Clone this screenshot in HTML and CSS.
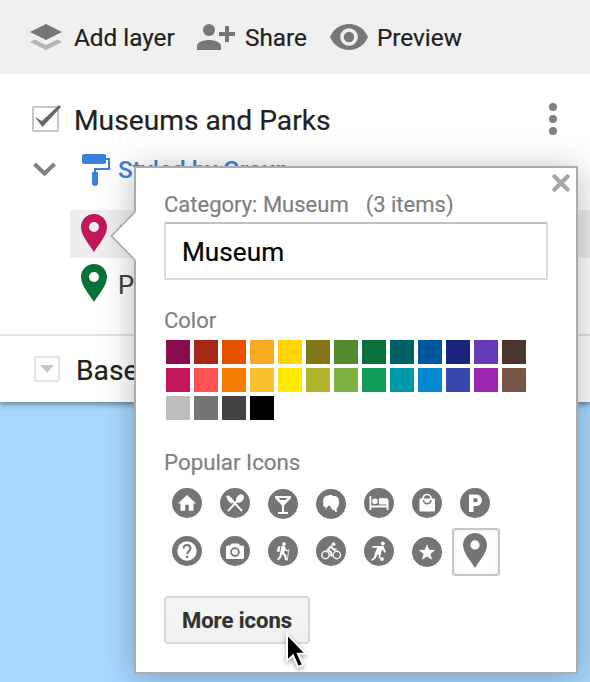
FILE: index.html
```
<!DOCTYPE html>
<html lang="en">
<head>
<meta charset="utf-8">
<title>Museums and Parks</title>
<link rel="stylesheet" href="styles.css">
</head>
<body>
<main class="panel">
  <nav class="toolbar">
    <div class="tool tool-layer">
      <svg width="32" height="26" viewBox="0 0 32 26"><path fill="#b5b5b5" d="M0 18 4.500 15.500 16 21 27.500 15.500 32 18 16 26z"/><path fill="#777" d="M16 0 32 8 16 16 0 8z"/></svg>
      <span>Add layer</span>
    </div>
    <div class="tool tool-share">
      <svg width="38" height="26" viewBox="0 0 38 26" fill="#777"><circle cx="12" cy="6" r="6"/><path d="M0 26v-4c0-4 7-6 12-6s12 2 12 6v4zM28 2h4v6h6v4h-6v6h-4v-6h-6V8h6z"/></svg>
      <span>Share</span>
    </div>
    <div class="tool tool-preview">
      <svg width="38" height="26" viewBox="0 0 38 26"><path fill="#777" d="M0 13C3.500 5 10.500 0 19 0s15.500 5 19 13c-3.500 8-10.500 13-19 13S3.500 21 0 13z"/><circle cx="19" cy="13" r="7" fill="#777" stroke="#f0f0f0" stroke-width="3.600"/></svg>
      <span>Preview</span>
    </div>
  </nav>

  <section class="layer">
    <header class="layer-head">
      <svg width="30" height="28" viewBox="0 0 30 28"><rect x="1" y="2" width="25" height="24" rx="1" fill="#fff" stroke="#c6c6c6" stroke-width="2"/><path fill="#666" d="m3 12 7 4L27 0l2 2-18.500 20z"/></svg>
      <h1>Museums and Parks</h1>
      <svg class="kebab" width="8" height="32" viewBox="0 0 8 32" fill="#808080"><circle cx="4" cy="4" r="4"/><circle cx="4" cy="16" r="4"/><circle cx="4" cy="28" r="4"/></svg>
    </header>
    <div class="style-row">
      <svg class="chevron" width="24" height="15" viewBox="0 0 24 15"><path d="m1.500 2 10 9.500 10-9.500" fill="none" stroke="#808080" stroke-width="4"/></svg>
      <svg class="roller" width="28" height="32" viewBox="0 0 28 32"><rect width="24" height="10" rx="2" fill="#3a81df"/><path d="M24 5h3v10H13v4" fill="none" stroke="#3a81df" stroke-width="2"/><path fill="#3a81df" d="M10 18h6v11a3 3 0 0 1-6 0z"/></svg>
      <span>Styled by Group</span>
    </div>
    <ul class="groups">
      <li class="group selected">
        <svg width="26" height="38" viewBox="0 0 26 38"><path fill="#c2185b" fill-rule="evenodd" d="M13 0C5.800 0 0 5.800 0 13c0 9 9 18 13 25 4-7 13-16 13-25C26 5.800 20.200 0 13 0zm0 8a5 5 0 1 1 0 10 5 5 0 0 1 0-10z"/></svg>
        <span>Museum</span>
      </li>
      <li class="group">
        <svg width="26" height="38" viewBox="0 0 26 38"><path fill="#097138" fill-rule="evenodd" d="M13 0C5.800 0 0 5.800 0 13c0 9 9 18 13 25 4-7 13-16 13-25C26 5.800 20.200 0 13 0zm0 8a5 5 0 1 1 0 10 5 5 0 0 1 0-10z"/></svg>
        <span>Park</span>
      </li>
    </ul>
  </section>

  <section class="base">
    <svg width="26" height="26" viewBox="0 0 26 26"><rect x="1" y="1" width="24" height="24" rx="1" fill="#fff" stroke="#e2e2e2" stroke-width="2"/><path fill="#c8c8c8" d="M6 9h14l-7 8z"/></svg>
    <span>Base map</span>
  </section>
</main>

<aside class="popup">
  <svg class="pointer" width="27" height="50" viewBox="0 0 27 50"><path fill="#fff" d="M27 0v50h-2L1 25 25 0z"/><path d="M25.500 .5 1.500 25l24 24.500" fill="none" stroke="#ababab" stroke-width="1.700"/></svg>
  <svg class="close" width="18" height="18" viewBox="0 0 18 18"><path d="m2.500 2.500 13 13m0-13-13 13" fill="none" stroke="#a6a6a6" stroke-width="4.300" stroke-linecap="round"/></svg>

  <div class="label category"><span>Category: Museum</span><span>(3 items)</span></div>
  <div class="field">Museum</div>

  <div class="label color-label">Color</div>
  <div class="swatches">
    <i class="c1"></i><i class="c2"></i><i class="c3"></i><i class="c4"></i><i class="c5"></i><i class="c6"></i><i class="c7"></i><i class="c8"></i><i class="c9"></i><i class="c10"></i><i class="c11"></i><i class="c12"></i><i class="c13"></i>
    <i class="c14"></i><i class="c15"></i><i class="c16"></i><i class="c17"></i><i class="c18"></i><i class="c19"></i><i class="c20"></i><i class="c21"></i><i class="c22"></i><i class="c23"></i><i class="c24"></i><i class="c25"></i><i class="c26"></i>
    <i class="c27"></i><i class="c28"></i><i class="c29"></i><i class="c30"></i>
  </div>

  <div class="label icons-label">Popular Icons</div>
  <div class="icons">
    <div class="cell"><svg class="ic" viewBox="0 0 30 30"><circle cx="15" cy="15" r="15"/><path class="w" d="m15 7 9 8.500h-2.500v7.300h-4.700v-6h-3.600v6H8.500v-7.300H6z"/></svg></div>
    <div class="cell"><svg class="ic" viewBox="0 0 30 30"><circle cx="15" cy="15" r="15"/><path class="l" d="m8 8 14 15M8 23 20 10" stroke-width="1.900"/><path class="w" d="M6.500 7.500c2.500 0 7 3.500 7.500 7l-2.500 1C8 13.500 6 10 6.500 7.500z"/><ellipse class="w" cx="20" cy="10.500" rx="3.200" ry="4.600" transform="rotate(42 20 10.500)"/></svg></div>
    <div class="cell low"><svg class="ic" viewBox="0 0 30 30"><circle cx="15" cy="15" r="15"/><path class="w" fill-rule="evenodd" d="M7 7h16v2l-7 7.500V23h4v2H10v-2h4v-6.500L7 9zm3.500 2 1.800 2h5.400l1.800-2z"/></svg></div>
    <div class="cell low"><svg class="ic" viewBox="0 0 30 30"><circle cx="15" cy="15" r="15"/><path class="w" d="M8.500 18c-1.800-1-1.800-2.500-1-4-1-4 .5-7 4.500-7.500 2-1 3.800-.8 5 .5 4-.5 6 2 5.800 5 .8 3-.5 5.500-2 7.500l-.3 2 .8 1.500h-2l-.3-1.500-2.300-.5c-1.500-1.500-2-3.500-3-4.500-1 0-1.700.8-2.200 1.500l-1.500 1.500.8 1H9.500l.3-2z"/></svg></div>
    <div class="cell"><svg class="ic" viewBox="0 0 30 30"><circle cx="15" cy="15" r="15"/><path class="w" d="M5.500 8h1.800v9.500H22.500v-1H15v-6.300h7a2.500 2.500 0 0 1 2.500 2.500V22h-1.800v-2.500H7.300V22H5.500z"/><circle class="w" cx="11" cy="13.300" r="2.800"/></svg></div>
    <div class="cell"><svg class="ic" viewBox="0 0 30 30"><circle cx="15" cy="15" r="15"/><path class="l" d="M11 11.500v-1a4 4 0 0 1 8 0v1" stroke-width="1.700"/><rect class="w" x="7.500" y="10.500" width="15.500" height="13" rx="1"/><path d="M11.500 12a3.700 3.700 0 0 0 7.500 0" fill="none" stroke="#757575" stroke-width="1.500"/></svg></div>
    <div class="cell"><svg class="ic" viewBox="0 0 30 30"><circle cx="15" cy="15" r="15"/><path class="w" fill-rule="evenodd" d="M9 6.500h7c7.800 0 7.800 11.500 0 11.500h-2.500v6H9zm4.500 3.800v4H16c2.300 0 2.300-4 0-4z"/></svg></div>

    <div class="cell"><svg class="ic" viewBox="0 0 30 30"><circle cx="15" cy="15" r="15"/><circle class="w" cx="15" cy="15" r="9.700"/><path d="M11.500 12.500c0-5 7-4.500 7 0 0 2.500-3.300 2.500-3.300 5.700" fill="none" stroke="#757575" stroke-width="2"/><circle cx="15.200" cy="21" r="1.300"/></svg></div>
    <div class="cell"><svg class="ic" viewBox="0 0 30 30"><circle cx="15" cy="15" r="15"/><path class="w" fill-rule="evenodd" d="M11.500 7.500h7l1.500 2h2.500A1.500 1.500 0 0 1 24 11v10.500a1.500 1.500 0 0 1-1.500 1.500h-15A1.500 1.500 0 0 1 6 21.500V11a1.500 1.500 0 0 1 1.500-1.500H10zM15 11.300a4.800 4.800 0 1 0 0 9.600 4.800 4.800 0 0 0 0-9.600z"/><circle class="w" cx="15" cy="16.100" r="3"/></svg></div>
    <div class="cell"><svg class="ic" viewBox="0 0 30 30"><circle cx="15" cy="15" r="15"/><circle class="w" cx="16" cy="7.800" r="1.900"/><path class="w" d="m13.500 10 3-.2 1.300 3.200 2.200 1.200-.5 1.300-2.700-1.300-.5 2.600 2 2.500.8 5h-2l-1-4.200-2-2.200-1 3.400-2.500 3.300-1.400-1 2.300-3.500zM10 10.500l2.500-.5-1.200 6-2.500-.5z"/><path class="l" d="m20.800 13-1.500 11.500" stroke-width=".8"/></svg></div>
    <div class="cell"><svg class="ic" viewBox="0 0 30 30"><circle cx="15" cy="15" r="15"/><g class="l" stroke-width="1.400"><circle cx="9.500" cy="19" r="3.700"/><circle cx="20.800" cy="19" r="3.700"/></g><circle class="w" cx="17.500" cy="8.200" r="1.900"/><path class="l" d="M20.500 13.500h-3l-2.500-3-3.300 3.300 3.600 2.700v4" stroke-width="1.900"/></svg></div>
    <div class="cell"><svg class="ic" viewBox="0 0 30 30"><circle cx="15" cy="15" r="15"/><circle class="w" cx="18.800" cy="7.500" r="1.900"/><circle class="w" cx="18" cy="23" r="1.900"/><path class="w" d="M8.300 10h11l2.700 6-1.400.8-2.300-3.600-1.500 4-4 2.300-.8 2.500-4 3-1-1.300 3-2.500 1-4.200 2.200-5.200H8.300z"/><path class="w" d="m14 15.500 3.200 1.800-1.200 5-1.600-.4.600-3.400-2-1.500z"/></svg></div>
    <div class="cell low"><svg class="ic" viewBox="0 0 30 30"><circle cx="15" cy="15" r="15"/><path class="w" d="m15 7.200 2.200 5.600 6 .3-4.700 3.800 1.600 5.800-5.100-3.300-5.100 3.300 1.600-5.800-4.700-3.800 6-.3z"/></svg></div>
    <div class="cell chosen"><svg width="24" height="35" viewBox="0 0 26 38"><path fill="#757575" fill-rule="evenodd" d="M13 0C5.800 0 0 5.800 0 13c0 9 9 18 13 25 4-7 13-16 13-25C26 5.800 20.200 0 13 0zm0 8a5 5 0 1 1 0 10 5 5 0 0 1 0-10z"/></svg></div>
  </div>

  <button class="more">More icons</button>
  <svg class="cursor" width="24" height="38" viewBox="0 0 24 38"><path fill="#000" stroke="#fff" stroke-width="2" d="M2 2v27l6-5.500 5 11.500 5-2.200-5-11h8z"/></svg>
</aside>
</body>
</html>
```
FILE: styles.css
```
* { box-sizing: border-box; }
body { margin: 0; width: 590px; height: 682px; position: relative; overflow: hidden; background: #a8d8ff; font-family: Roboto, sans-serif; color: #212121; -webkit-text-stroke: .2px; }
svg { display: block; flex: none; }
span, h1, .label, .field { white-space: nowrap; }

.panel { height: 402px; background: #fff; box-shadow: 0 2px 6px rgba(0, 0, 0, .45); }
.toolbar { height: 74px; padding-left: 30px; display: flex; align-items: center; background: #f0f0f0; font-size: 24.300px; }
.toolbar span { padding-top: 1px; }
.tool { display: flex; align-items: center; }
.tool-layer { width: 167px; gap: 12px; }
.tool-share { width: 133px; gap: 10px; }
.tool-preview { gap: 9px; }

.layer { height: 262px; border-bottom: 2px solid #e2e2e2; }
.layer-head { height: 91px; padding: 0 33px 0 32px; display: flex; align-items: center; }
.layer-head > svg { margin-top: -2px; }
.layer-head h1 { margin: 0 0 0 12px; padding-top: 2px; font-size: 28.200px; font-weight: 400; }
.layer-head .kebab { margin-left: auto; }
.style-row { height: 10px; padding-left: 33px; display: flex; align-items: center; font-size: 24.300px; font-weight: 500; color: #3a81df; -webkit-text-stroke: 0; }
.style-row .chevron { margin-top: -2px; }
.style-row span { padding-bottom: 2px; }
.roller { margin: 0 8px 0 25px; }
.groups { list-style: none; margin: 35px 0 0; padding: 0 0 0 70px; font-size: 25.500px; color: #444; }
.group { height: 50px; padding-left: 11px; display: flex; align-items: center; gap: 11px; }
.group span { padding-top: 3px; }
.group.selected { height: 48px; padding-bottom: 2px; background: #eee; }
.base { height: 66px; padding: 0 0 0 34px; display: flex; align-items: center; gap: 16px; font-size: 28.200px; }
.base span { padding-top: 2px; }

.popup { position: absolute; left: 134px; top: 166px; width: 444px; height: 508px; padding: 23px 28px; border: 2px solid #ababab; background: #fff; box-shadow: 0 4px 32px rgba(0, 0, 0, .28); }
.pointer { position: absolute; left: -26px; top: 43px; }
.close { position: absolute; right: 6px; top: 6px; }
.label { height: 28px; line-height: 28px; font-size: 22px; color: #808080; }
.category { display: flex; gap: 17px; }
.field { margin-top: 3px; width: 384px; height: 58px; padding-left: 16px; border: 2px solid #d9d9d9; border-top-color: #c0c0c0; border-radius: 2px; font-size: 26.200px; line-height: 57px; color: #000; }
.color-label { margin-top: 27px; }
.swatches { margin: 5px 0 0 2px; display: grid; grid-template-columns: repeat(13, 24px); gap: 4px; }
.swatches i { height: 24px; }
.icons-label { margin-top: 28px; font-size: 22.300px; }
.icons { margin: 3px 0 0 -1px; display: grid; grid-template-columns: repeat(7, 48px); grid-auto-rows: 48px; }
.cell { display: flex; align-items: center; justify-content: center; }
.low { padding-top: 2px; }
.ic { width: 30px; height: 30px; fill: #757575; }
.ic .w { fill: #fff; }
.ic .l { fill: none; stroke: #fff; }
.chosen { margin: 1px -1px -1px 1px; border: 2px solid #c6c6c6; border-radius: 4px; padding: 0 2px 3px 0; box-shadow: inset 0 0 4px rgba(0, 0, 0, .1); }
.more { margin-top: 21px; display: block; width: 146px; height: 48px; padding: 1px 0 0; border: 2px solid #d8d8d8; border-radius: 4px; background: linear-gradient(#f5f5f5, #f0f0f0); font: 700 22px Roboto, sans-serif; color: #333; }
.cursor { position: absolute; left: 149px; top: 464px; filter: drop-shadow(0 2px 2px rgba(0, 0, 0, .35)); }

.c1 { background: #880e4f; } .c2 { background: #a52714; } .c3 { background: #e65100; } .c4 { background: #f9a825; } .c5 { background: #ffd600; }
.c6 { background: #817717; } .c7 { background: #558b2f; } .c8 { background: #097138; } .c9 { background: #006064; } .c10 { background: #01579b; }
.c11 { background: #1a237e; } .c12 { background: #673ab7; } .c13 { background: #4e342e; } .c14 { background: #c2185b; } .c15 { background: #ff5252; }
.c16 { background: #f57c00; } .c17 { background: #fbc02d; } .c18 { background: #ffea00; } .c19 { background: #afb42b; } .c20 { background: #7cb342; }
.c21 { background: #0f9d58; } .c22 { background: #0097a7; } .c23 { background: #0288d1; } .c24 { background: #3949ab; } .c25 { background: #9c27b0; }
.c26 { background: #795548; } .c27 { background: #bdbdbd; } .c28 { background: #757575; } .c29 { background: #424242; } .c30 { background: #000; }
```
